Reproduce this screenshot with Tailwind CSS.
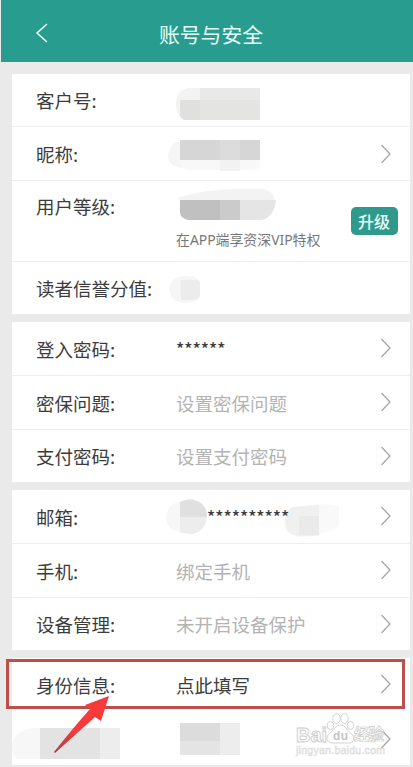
<!DOCTYPE html>
<html lang="zh-CN">
  <head>
    <meta charset="UTF-8" />
    <meta name="viewport" content="width=device-width, initial-scale=1.0" />
    <script src="https://cdn.jsdelivr.net/npm/@tailwindcss/browser@4"></script>
    <title>账号与安全</title>
  </head>
  <body
    class="relative h-[767px] overflow-hidden bg-[#eaeaea] font-['Noto_Sans_CJK_SC',sans-serif] text-[18.5px] leading-6 text-[#3c3c3c]"
  >
    <!-- One chevron shared by all the rows -->
    <svg class="hidden">
      <symbol id="chevron" viewBox="0 0 12 20">
        <path d="M1.5 1 10 10 1.5 19" fill="none" stroke="#a6a6a6" stroke-width="1.3" />
      </symbol>
    </svg>

    <header class="ml-px flex h-[62px] items-center bg-[#289c8e] pt-1 text-[#e6fffb]">
      <svg class="ml-[34px] h-5 w-[13px]" viewBox="0 0 13 20">
        <path d="M12 1 2 10l10 9" fill="none" stroke="currentColor" stroke-width="1.6" />
      </svg>
      <h1 class="ml-[111px] pt-0.5 text-[20.8px]">账号与安全</h1>
    </header>

    <main class="flex flex-col gap-2 pt-3 pr-[3.5px] pl-3">
      <section class="bg-white">
        <div class="flex h-[53px] items-center border-b border-[#ededed] pl-6">
          <p class="w-[140px]">客户号:</p>
          <svg class="mt-2 h-9 w-24" viewBox="0 0 96 36">
            <path d="M0 18Q0 4 12 2h12v32H8Q0 30 0 18" fill="#f3f3f2" />
            <path d="M24 2h60v32H24z" fill="#e9e9e9" />
            <path d="M4 14h80v20H8l-4-4z" fill="#e4e4e3" />
            <path d="M4 14h20v20H8l-4-4z" fill="#e0e0df" />
          </svg>
        </div>
        <div class="flex h-[54px] items-center border-b border-[#ededed] pr-[18px] pl-6">
          <p class="w-[132px]">昵称:</p>
          <svg class="h-9 w-24" viewBox="0 0 96 36">
            <path d="M0 20Q2 5 14 5v27Q0 30 0 20" fill="#f6f6f6" />
            <path d="M12 23h80v8q-4 4-12 3H20q-8-1-8-11" fill="#f8f8f8" />
            <path d="M52 23h20v12H52z" fill="#f2f2f2" />
            <path d="M12 4h80v20H12z" fill="#d6d6d6" />
            <path d="M52 4h20v20H52z" fill="#dcdcdc" />
          </svg>
          <svg class="ml-auto h-5 w-3"><use href="#chevron" /></svg>
        </div>
        <div class="flex h-[81px] border-b border-[#ededed] pr-3 pl-6">
          <p class="w-[140px] pt-[13px]">用户等级:</p>
          <div>
            <svg class="mt-[7px] h-9 w-[104px]" viewBox="0 0 104 36">
              <path d="M2 10Q24 2 60 1h28q9 2 11 11H4z" fill="#f3f3f3" />
              <path d="M64 12h36q-2 17-14 20H64z" fill="#e5e5e5" />
              <path d="M4 12h60v20H12Q4 30 4 24z" fill="#c0c0c0" />
              <path d="M44 12h20v20H44z" fill="#cbcbcb" />
            </svg>
            <p
              class="mt-1 font-['Noto_Sans','Noto_Sans_CJK_SC',sans-serif] text-[13.9px] text-[#777777]"
            >
              在APP端享资深VIP特权
            </p>
          </div>
          <button
            class="mt-[26px] ml-auto h-7 w-[47px] rounded-[5px] bg-[#2f9a8b] text-center text-[16px] font-medium text-[#eafffb]"
          >
            升级
          </button>
        </div>
        <div class="flex h-[52px] items-center pl-6">
          <p class="w-[133px] whitespace-nowrap">读者信誉分值:</p>
          <svg class="mt-1 h-7 w-9" viewBox="0 0 36 28">
            <path d="M0 14Q2 0 16 0q15 0 15 8v12q-3 7-15 7Q2 26 0 14" fill="#f6f6f6" />
            <path d="M12 4h15q4 0 4 5v8q0 6-5 7H12z" fill="#ececec" />
          </svg>
        </div>
      </section>

      <section class="bg-white">
        <div class="flex h-[54px] items-center border-b border-[#ededed] pr-[18px] pl-6">
          <p class="w-[140px]">登入密码:</p>
          <p class="text-[17px] font-medium">******</p>
          <svg class="mb-0.5 ml-auto h-5 w-3"><use href="#chevron" /></svg>
        </div>
        <div class="flex h-[54px] items-center border-b border-[#ededed] pr-[18px] pl-6">
          <p class="w-[140px]">密保问题:</p>
          <p class="text-[#b3b3b3]">设置密保问题</p>
          <svg class="mb-0.5 ml-auto h-5 w-3"><use href="#chevron" /></svg>
        </div>
        <div class="flex h-[52px] items-center pr-[18px] pl-6">
          <p class="w-[140px]">支付密码:</p>
          <p class="text-[#b3b3b3]">设置支付密码</p>
          <svg class="ml-auto h-5 w-3"><use href="#chevron" /></svg>
        </div>
      </section>

      <section class="bg-white">
        <div class="flex h-[54px] items-center border-b border-[#ededed] pr-[18px] pl-6">
          <p class="w-[130px]">邮箱:</p>
          <svg class="h-9 w-[41px]" viewBox="0 0 41 36">
            <path d="M0 18Q2 4 14 3v30Q0 31 0 18" fill="#f7f7f7" />
            <path d="M14 3Q26-3 36 5q5 5 5 12-1 15-14 18-8 0-13-2z" fill="#ededed" />
            <path d="M14 3Q26-3 36 5q5 5 5 13H14z" fill="#e0e0e0" />
          </svg>
          <p class="relative text-[17px] font-medium">**********</p>
          <svg class="-ml-1 mt-1.5 h-9 w-14" viewBox="0 0 56 36">
            <path d="M14 5Q34 0 54 4v20q-4 4-20 8H14z" fill="#f9f9f9" />
            <path d="M0 20Q0 8 8 5l26-2v30q-16 3-26 0Q0 30 0 20" fill="#f0f0f0" />
            <path d="M14 14h20v19H14z" fill="#eaeaea" />
          </svg>
          <svg class="mb-0.5 ml-auto h-5 w-3"><use href="#chevron" /></svg>
        </div>
        <div class="flex h-[54px] items-center border-b border-[#ededed] pr-[18px] pl-6">
          <p class="w-[140px]">手机:</p>
          <p class="text-[#b3b3b3]">绑定手机</p>
          <svg class="mb-0.5 ml-auto h-5 w-3"><use href="#chevron" /></svg>
        </div>
        <div class="flex h-[52px] items-center pr-[18px] pl-6">
          <p class="w-[140px]">设备管理:</p>
          <p class="text-[#b3b3b3]">未开启设备保护</p>
          <svg class="ml-auto h-5 w-3"><use href="#chevron" /></svg>
        </div>
      </section>

      <section class="bg-white">
        <div class="flex h-[54px] items-center pr-[18px] pl-6">
          <p class="w-[140px]">身份信息:</p>
          <p>点此填写</p>
          <svg class="mb-0.5 ml-auto h-5 w-3"><use href="#chevron" /></svg>
        </div>
        <div class="flex h-[53px] items-center pr-[18px]">
          <svg class="mt-1.5 h-9 w-[108px]" viewBox="0 0 108 36">
            <path d="M0 20Q4 5 24 4h4v31H6Q-1 33 0 20" fill="#f7f7f7" />
            <path d="M28 4h80v31H28z" fill="#ededed" />
            <path d="M28 4h60v31H28z" fill="#e3e3e3" />
          </svg>
          <svg class="ml-[60px] h-8 w-[61px]" viewBox="0 0 61 32">
            <path d="M0 0h60v32H0z" fill="#ededed" />
            <path d="M0 0h40v32H0z" fill="#e4e4e4" />
            <path d="M0 0h40v18H0z" fill="#dcdcdc" />
          </svg>
          <svg class="ml-auto h-5 w-3"><use href="#chevron" /></svg>
        </div>
      </section>
    </main>

    <!-- Watermark -->
    <svg
      class="absolute top-[708px] left-[290px] h-[52px] w-[110px] font-['Liberation_Sans',sans-serif]"
      viewBox="0 0 110 52"
    >
      <g fill="#ffffff" stroke="#cccccc" stroke-width="0.900">
        <ellipse cx="40.500" cy="17.500" rx="3.400" ry="4" />
        <ellipse cx="46.500" cy="10.500" rx="3.700" ry="5" />
        <ellipse cx="54.500" cy="10.500" rx="3.700" ry="5" />
        <ellipse cx="60.500" cy="17.500" rx="3.400" ry="4" />
        <path d="M50.500 17c5 0 6 5 10 8 5 4 4 10-2 10H43c-7 0-8-6-3-10 5-3 5-8 10.500-8z" />
        <text x="6" y="33.500" font-size="20" font-weight="bold" textLength="31" lengthAdjust="spacingAndGlyphs">Bai</text>
        <text
          x="64"
          y="32"
          font-size="15.500"
          font-weight="bold"
          font-family="Noto Sans CJK SC"
          textLength="30"
          stroke-width="0.700"
        >经验</text>
      </g>
      <text x="43" y="31.500" font-size="12" font-weight="bold" fill="#c4c4c4" textLength="15">du</text>
      <text x="6" y="46" font-size="10.500" fill="#f6f6f6" stroke="#d8d8d8" stroke-width="0.500" textLength="89">jingyan.baidu.com</text>
    </svg>

    <!-- Highlight around the identity row and the arrow that points to it -->
    <div class="absolute top-[659px] left-[6px] h-[50px] w-[399px] border-[3px] border-[#bd4f4b]"></div>
    <svg class="absolute top-[695px] left-[53px] h-[60px] w-[58px]" viewBox="0 0 58 60">
      <defs>
        <linearGradient id="arrow" x1="1" y1="0" x2="0" y2="1">
          <stop offset="0.6" stop-color="#f93a3a" />
          <stop offset="1" stop-color="#a83f48" />
        </linearGradient>
      </defs>
      <path d="M56 1 32 10l5 4Q20 33 1 57l1 1 40-36 6 4z" fill="url(#arrow)" />
    </svg>
  </body>
</html>
